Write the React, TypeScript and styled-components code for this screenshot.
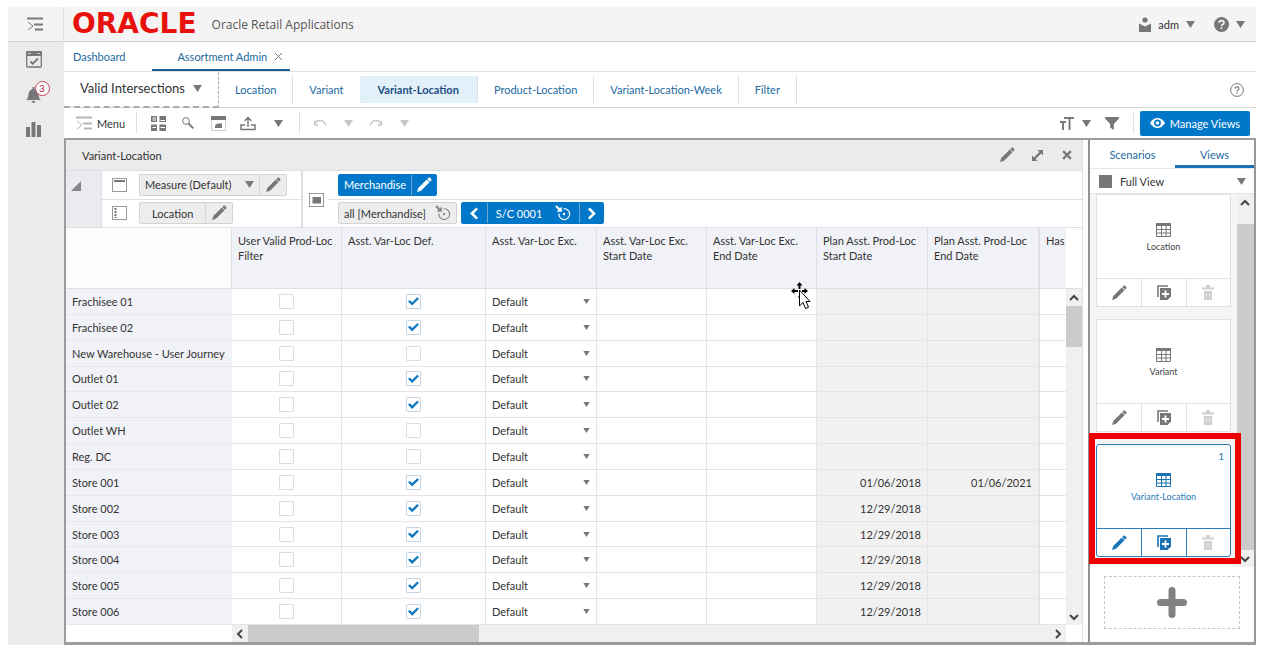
import React from "react";
import styled, { createGlobalStyle, css } from "styled-components";

const GREY = "#757779";
const BLUE = "#0077c8";
const LINK = "#22699f";
const LINE = "#dcdfe3";

const GlobalStyle = createGlobalStyle`
  * { box-sizing: border-box; }
  body {
    margin: 0;
    background: #fff;
    color: #333;
    font: 11px/15px Lato, "Open Sans", sans-serif;
  }
  button, input, select { font: inherit; color: inherit; margin: 0; }
  button { border: 0; padding: 0; background: none; cursor: pointer; }
  a { color: ${LINK}; text-decoration: none; }
  svg { display: block; flex: none; }
`;

/* ---------- icons ---------- */

type IconProps = { size?: number; color?: string };

const Caret = ({ size = 9, color = GREY }: IconProps) => (
  <svg width={size} height={size - 2} viewBox="0 0 9 7" aria-hidden="true">
    <path d="M0 0h9L4.500 7z" fill={color} />
  </svg>
);
const Pencil = ({ size = 16, color = GREY }: IconProps) => (
  <svg width={size} height={size} viewBox="0 0 16 16" aria-hidden="true">
    <path d="M1 15L2.300 11 10.800 2.500 13.500 5.200 5 13.700zM11.300 2L12.700.6Q13.200.2 13.700.6L15.400 2.300Q15.800 2.800 15.400 3.300L14 4.700z" fill={color} />
  </svg>
);
const Burger = ({ color = GREY }: IconProps) => (
  <svg width="17" height="14" viewBox="0 0 17 14" aria-hidden="true">
    <path d="M0 1.500h16M7 7.500h9M8 12.500h8" stroke={color} strokeWidth="2" fill="none" />
    <path d="M1 5l5 4-5 4" stroke={color} fill="none" />
  </svg>
);
const Chevron = ({ dir, color = "#444", size = 10, weight = 2 }: IconProps & { dir: "up" | "down" | "left" | "right"; weight?: number }) => {
  const d = { up: "M1 7l4-4 4 4", down: "M1 3l4 4 4-4", left: "M7 1L3 5l4 4", right: "M3 1l4 4-4 4" }[dir];
  return (
    <svg width={size} height={size} viewBox="0 0 10 10" aria-hidden="true">
      <path d={d} fill="none" stroke={color} strokeWidth={weight} />
    </svg>
  );
};
const Cross = ({ size = 9, weight = 1 }: IconProps & { weight?: number }) => (
  <svg width={size} height={size} viewBox="0 0 9 9" aria-hidden="true">
    <path d="M1 1l7 7M8 1L1 8" stroke={GREY} strokeWidth={weight} />
  </svg>
);
const CalendarCheck = () => (
  <svg width="16" height="17" viewBox="0 0 16 17" aria-hidden="true">
    <rect x=".7" y="1" width="14.600" height="15" rx="1" fill="none" stroke={GREY} strokeWidth="1.300" />
    <path d="M0 1q0-1 1-1h14q1 0 1 1v4H0z" fill={GREY} />
    <path d="M2.500 2.500h2M11.500 2.500h2" stroke="#ebebeb" />
    <path d="M4.500 10.500l2.200 2.200L12 7.500" fill="none" stroke={GREY} strokeWidth="1.800" />
  </svg>
);
const Bell = () => (
  <svg width="15" height="16" viewBox="0 0 15 16" aria-hidden="true">
    <path d="M0 13c2-1 2-3 2.500-6C3 3.500 5 2 7.500 2S12 3.500 12.500 7c.5 3 .5 5 2.500 6zM5.500 14h4q-.5 2-2 2t-2-2zM6.500 0h2v2h-2z" fill={GREY} />
  </svg>
);
const Bars = () => (
  <svg width="15" height="15" viewBox="0 0 15 15" aria-hidden="true">
    <path d="M0 5h4v10H0zM5.500 0h4v15h-4zM11 3h4v12h-4z" fill={GREY} />
  </svg>
);
const Person = () => (
  <svg width="12" height="15" viewBox="0 0 12 15" aria-hidden="true">
    <circle cx="6" cy="3" r="2.600" fill={GREY} />
    <path d="M0 6.500l6 3 6-3V15H0z" fill={GREY} />
  </svg>
);
const HelpSolid = () => (
  <svg width="15" height="15" viewBox="0 0 15 15" aria-hidden="true">
    <circle cx="7.500" cy="7.500" r="7.500" fill={GREY} />
    <path d="M5 5.800Q5.200 3.600 7.500 3.600T10 5.700Q10 6.800 8.600 7.500 7.500 8.100 7.500 9.200M7.500 10.300v1.700" fill="none" stroke="#f4f4f4" strokeWidth="1.600" />
  </svg>
);
const HelpRing = () => (
  <svg width="14" height="14" viewBox="0 0 14 14" aria-hidden="true">
    <circle cx="7" cy="7" r="6.400" fill="none" stroke={GREY} />
    <path d="M5 5.600Q5.200 3.900 7 3.900T9 5.500Q9 6.400 8 7 7 7.600 7 8.500M7 9.500v1.300" fill="none" stroke={GREY} strokeWidth="1.200" />
  </svg>
);
const Tiles = () => (
  <svg width="15" height="15" viewBox="0 0 15 15" aria-hidden="true">
    <path d="M0 0h6v6H0zM8.500 0H15v6H8.500zM0 8.500h6V15H0zM8.500 8.500H15V15H8.500z" fill={GREY} />
    <path d="M1.500 2h3.500M1.500 4h3.500M9.500 4.500h4.500M1.500 11.500h3.500M9.500 11.500h4.500" stroke="#fff" />
  </svg>
);
const Lens = () => (
  <svg width="12" height="12" viewBox="0 0 12 12" aria-hidden="true">
    <circle cx="4" cy="4" r="3.400" fill="none" stroke={GREY} />
    <path d="M6.500 6.500l4.800 4.800" stroke={GREY} strokeWidth="1.800" />
  </svg>
);
const WindowCalc = () => (
  <svg width="15" height="15" viewBox="0 0 15 15" aria-hidden="true">
    <path d="M.5 1v13.500h14V1" fill="none" stroke="#ccc" />
    <path d="M0 0h15v4H0zM4 10.500Q4 7.500 8 7.500h3V12H4z" fill={GREY} />
  </svg>
);
const Upload = () => (
  <svg width="16" height="15" viewBox="0 0 16 15" aria-hidden="true">
    <path d="M8 11V2M4.500 5L8 1.500 11.500 5M5 9H1v4.500h14V9h-4" fill="none" stroke={GREY} strokeWidth="1.400" />
  </svg>
);
const Turn = ({ flip }: { flip?: boolean }) => (
  <svg width="14" height="8" viewBox="0 0 14 8" aria-hidden="true">
    {flip ? (
      <path d="M1 6.500Q3 1.500 7 1.500T12 5.500M12.500 1.500v4.500H9" fill="none" stroke="#c8c8c8" strokeWidth="1.300" />
    ) : (
      <path d="M13 6.500Q11 1.500 7 1.500T2 5.500M1.500 1.500v4.500H5" fill="none" stroke="#c8c8c8" strokeWidth="1.300" />
    )}
  </svg>
);
const TextSize = () => (
  <svg width="14" height="13" viewBox="0 0 14 13" aria-hidden="true">
    <path d="M4 1h10M9.500 1v12M0 5h6M3 5v8" stroke={GREY} strokeWidth="1.900" />
  </svg>
);
const Funnel = () => (
  <svg width="14" height="13" viewBox="0 0 14 13" aria-hidden="true">
    <path d="M0 0h14v1.500L8.800 7v6L5.200 10.500V7L0 1.500z" fill={GREY} />
  </svg>
);
const Eye = () => (
  <svg width="15" height="10" viewBox="0 0 15 10" aria-hidden="true">
    <path d="M0 5Q3 0 7.500 0T15 5Q12 10 7.500 10T0 5z" fill="#fff" />
    <circle cx="7.500" cy="5" r="3.400" fill={BLUE} />
    <circle cx="7.500" cy="5" r="1.800" fill="#fff" />
  </svg>
);
const Expand = () => (
  <svg width="13" height="13" viewBox="0 0 13 13" aria-hidden="true">
    <path d="M3 10L10 3" stroke={GREY} strokeWidth="2.400" />
    <path d="M6.500 1H12v5.500zM1 6.500V12h5.500z" fill={GREY} />
  </svg>
);
const Fold = () => (
  <svg width="10" height="10" viewBox="0 0 10 10" aria-hidden="true">
    <path d="M10 0v10H0z" fill="#85878a" />
  </svg>
);
const AxisIcon = ({ kind }: { kind: "column" | "row" | "page" }) => (
  <svg width="15" height="14" viewBox="0 0 15 14" aria-hidden="true">
    <rect x=".5" y=".5" width="14" height="13" fill="#fff" stroke="#97999c" />
    {kind === "column" && <path d="M2 3h11" stroke={GREY} strokeWidth="2" />}
    {kind === "row" && <path d="M3.500 2v10" stroke={GREY} strokeDasharray="2 1" strokeWidth="2" />}
    {kind === "page" && <path d="M3.500 4h8.500v6.500H3.500z" fill={GREY} />}
  </svg>
);
const Target = ({ color = "#85878a" }: IconProps) => (
  <svg width="16" height="16" viewBox="0 0 16 16" aria-hidden="true">
    <path d="M8.500 3.800A5.400 5.400 0 1 1 3.900 8.500" fill="none" stroke={color} strokeWidth="1.200" />
    <circle cx="9" cy="9" r="1.200" fill={color} />
    <path d="M1 1l4 4" stroke={color} strokeWidth="2" />
    <path d="M6.800 1.500v5.300H1.500z" fill={color} />
  </svg>
);
const GridIcon = ({ color = GREY }: IconProps) => (
  <svg width="15" height="14" viewBox="0 0 15 14" aria-hidden="true">
    <path d="M.5 1v12.500h14V1M0 6.500h15M0 10h15M5.500 3v11M10 3v11" fill="none" stroke={color} />
    <path d="M0 0h15v3H0z" fill={color} />
  </svg>
);
const Copy = ({ color = GREY }: IconProps) => (
  <svg width="14" height="15" viewBox="0 0 14 15" aria-hidden="true">
    <path d="M11 1H1v11" fill="none" stroke={color} strokeWidth="1.600" />
    <path d="M3 3h11v8.500L10.500 15H3z" fill={color} />
    <path d="M8.500 5.500v7M5 9h7" stroke="#fff" strokeWidth="1.800" />
  </svg>
);
const Trash = () => (
  <svg width="12" height="15" viewBox="0 0 12 15" aria-hidden="true">
    <path d="M0 2.500h12v2H0zM4 0h4v2.500H4zM2 6h8v9H2z" fill="#cfcfcf" />
    <path d="M4.500 8v5M7.500 8v5" stroke="#e8e8e8" />
  </svg>
);
const Plus = () => (
  <svg width="30" height="31" viewBox="0 0 30 31" aria-hidden="true">
    <path d="M15 3.500v24M3.500 15.500h23" stroke="#808284" strokeWidth="7" strokeLinecap="round" />
  </svg>
);
const MoveCursor = () => (
  <svg width="20" height="28" viewBox="0 0 20 28" aria-hidden="true">
    <path d="M8.500 0L5.500 3.500h2V7h2V3.500h2zM0 9l3.500-3v2H7v2H3.500v2zM17 9l-3.500-3v2H11v2h2.500v2zM7.500 14h2v2h-2z" fill="#000" />
    <path d="M8.500 8v16l3.500-3.500 2.500 6 3-1.300-2.500-5.700H19z" fill="#fff" stroke="#000" />
  </svg>
);

/* ---------- frame ---------- */

const Page = styled.div`
  display: flex;
  flex-direction: column;
  min-height: 100vh;
  padding: 7px 9px 5px 8px;
`;
const TopBar = styled.header`
  display: flex;
  align-items: center;
  height: 35px;
  background: #f4f4f4;
  border-bottom: 1px solid #cfd1d3;
`;
const TopMenu = styled.button`
  display: flex;
  align-items: center;
  justify-content: center;
  width: 56px;
  height: 34px;
  border-right: 1px solid ${LINE};
`;
const Logo = styled.span`
  padding: 0 15px 0 8px;
  color: #e8120c;
  font: bold 28px/34px "DejaVu Sans", sans-serif;
`;
const AppName = styled.span`
  flex: 1;
  color: #555;
  font-family: "Open Sans", sans-serif;
  font-size: 12px;
`;
const TopButton = styled.button`
  display: flex;
  align-items: center;
  gap: 7px;
  margin-right: 11px;
  & + & { margin-left: 8px; }
`;
const Body = styled.div`
  flex: 1;
  display: flex;
`;
const Rail = styled.nav`
  display: flex;
  flex-direction: column;
  align-items: center;
  gap: 18px;
  width: 56px;
  padding: 9px 5px 0 0;
  background: #ebebeb;
`;
const RailButton = styled.button`
  position: relative;
  display: flex;
  align-items: center;
  justify-content: center;
  width: 24px;
  height: 17px;
`;
const Badge = styled.span`
  position: absolute;
  top: -5px;
  right: -4px;
  width: 15px;
  height: 15px;
  border: 1px solid #c0405a;
  border-radius: 50%;
  background: #fff;
  color: #c0203f;
  font-size: 10px;
  line-height: 13px;
`;
const Main = styled.main`
  flex: 1;
  min-width: 0;
  display: flex;
  flex-direction: column;
`;
const DocTabs = styled.div`
  display: flex;
  height: 30px;
  border-bottom: 1px solid #dedede;
`;
const DocTab = styled.div<{ $active?: boolean }>`
  display: flex;
  align-items: center;
  gap: 7px;
  padding: 2px ${(p) => (p.$active ? "7px 0 25px" : "27px 0 9px")};
  border-bottom: 2px solid ${(p) => (p.$active ? "#1f5f9c" : "transparent")};
`;
const TaskBar = styled.div`
  display: flex;
  align-items: center;
  height: 36px;
  padding-right: 12px;
  border-bottom: 1px solid #d6d6d6;
`;
const TaskPicker = styled.button`
  display: flex;
  align-items: center;
  gap: 8px;
  height: 36px;
  width: 155px;
  padding-left: 16px;
  border: dashed #aaa;
  border-width: 0 1px 2px 0;
  font-size: 13px;
`;
const StepNav = styled.nav`
  flex: 1;
  display: flex;
`;
const Step = styled.a<{ $active?: boolean }>`
  padding: 6px 16px;
  border-right: 1px solid ${LINE};
  ${(p) =>
    p.$active &&
    css`
      margin-left: -1px;
      padding: 6px 18px;
      border-radius: 2px;
      background: #e2f0fa;
      color: #1c4f80;
      font-weight: bold;
    `}
`;
const ToolBar = styled.div`
  display: flex;
  align-items: center;
  height: 30px;
  padding-right: 6px;
`;
const MenuButton = styled.button`
  display: flex;
  align-items: center;
  gap: 4px;
  padding: 0 5px 0 12px;
`;
const Tool = styled.button<{ $w: number }>`
  display: flex;
  align-items: center;
  justify-content: center;
  width: ${(p) => p.$w}px;
  height: 24px;
`;
const Rule = styled.span`
  width: 1px;
  height: 22px;
  margin: 0 6px;
  background: ${LINE};
`;
const Spacer = styled.span`
  flex: 1;
`;
const Manage = styled.button`
  display: flex;
  align-items: center;
  gap: 5px;
  height: 25px;
  padding: 0 10px;
  border-radius: 2px;
  background: ${BLUE};
  color: #fff;
`;

/* ---------- worksheet ---------- */

const Work = styled.div`
  flex: 1;
  display: flex;
  gap: 5px;
  border: 2px solid #9b9c9e;
  border-width: 2px 1px 3px 2px;
`;
const Sheet = styled.section`
  flex: 1;
  min-width: 0;
  display: flex;
  flex-direction: column;
  border-right: 1px solid ${LINE};
`;
const SheetTitle = styled.div`
  display: flex;
  align-items: center;
  height: 31px;
  padding-left: 16px;
  background: #ebebeb;
  border-bottom: 1px solid ${LINE};
`;
const SheetHeading = styled.h1`
  flex: 1;
  margin: 0;
  font-size: 11px;
  font-weight: normal;
`;
const Axes = styled.div`
  display: flex;
  height: 56px;
`;
const FoldCell = styled.button`
  display: flex;
  width: 36px;
  padding: 10px 0 0 5px;
  background: #ebebef;
  border-right: 1px solid ${LINE};
`;
const AxisGroup = styled.div<{ $wide?: boolean }>`
  display: flex;
  flex-direction: column;
  ${(p) => (p.$wide ? "flex: 1;" : "width: 199px;")}
`;
const AxisRow = styled.div`
  flex: 1;
  display: flex;
  align-items: center;
  gap: 4px;
  padding-left: 10px;
  & + & { border-top: 1px solid ${LINE}; }
  & > svg { margin-right: 8px; }
`;
const PageAxis = styled.div`
  display: flex;
  align-items: center;
  padding: 2px 4px 0 6px;
  border-left: 2px solid ${LINE};
`;
const Chip = styled.div<{ $blue?: boolean }>`
  display: flex;
  height: 22px;
  border: 1px solid ${(p) => (p.$blue ? BLUE : "#d3d3d3")};
  border-radius: 2px;
  background: ${(p) => (p.$blue ? BLUE : "#ededed")};
  color: ${(p) => (p.$blue ? "#fff" : "#333")};
`;
const ChipPart = styled.button<{ $pad?: number; $gap?: number }>`
  display: flex;
  align-items: center;
  gap: ${(p) => p.$gap ?? 13}px;
  padding: 0 ${(p) => p.$pad ?? 5}px;
  & + & { border-left: 1px solid rgba(190, 200, 210, 0.600); }
`;

const GridArea = styled.div`
  flex: 1;
  display: flex;
  border-top: 1px solid ${LINE};
`;
const TableClip = styled.div`
  flex: 1;
  min-width: 0;
  display: grid;
  overflow: hidden;
`;
const Table = styled.table`
  table-layout: fixed;
  width: 100%;
  height: 100%;
  border-collapse: separate;
  border-spacing: 0;
`;
const HeadCell = styled.th<{ $w?: number; $blank?: boolean; $freeze?: boolean }>`
  ${(p) => p.$w && `width: ${p.$w}px;`}
  height: 61px;
  padding: 5px 0 0 6px;
  background: ${(p) => (p.$blank ? "#fcfcfd" : "#f0f2f7")};
  border: solid ${LINE};
  border-width: 0 ${(p) => (p.$freeze ? 2 : 1)}px 1px 0;
  font-weight: normal;
  text-align: left;
  vertical-align: top;
  overflow: hidden;
  white-space: nowrap;
  &:last-child { border-right: 0; }
`;
const RowHead = styled.th`
  padding: 0 6px;
  background: #f0f2f7;
  border-bottom: 1px solid #e4e7ec;
  font-weight: normal;
  text-align: left;
  white-space: nowrap;
`;
const Cell = styled.td<{ $locked?: boolean; $freeze?: boolean; $align?: string }>`
  padding: 0 6px;
  border: solid #e4e4e6;
  border-width: 0 ${(p) => (p.$freeze ? 2 : 1)}px 1px 0;
  background: ${(p) => (p.$locked ? "#f1f1f1" : "#fff")};
  text-align: ${(p) => p.$align ?? "left"};
  &:last-child { border-right: 0; }
`;
const Check = styled.input.attrs({ type: "checkbox" })`
  appearance: none;
  display: block;
  position: relative;
  width: 15px;
  height: 15px;
  margin: 0 auto;
  border: 1px solid #dcdcdc;
  border-radius: 1px;
  background: #fff;
  &:checked { border-color: #c3d5e4; }
  &:checked::after {
    content: "";
    position: absolute;
    inset: 2px 1px;
    background: #1478be;
    clip-path: polygon(0 50%, 16% 34%, 38% 58%, 84% 4%, 100% 20%, 38% 96%);
  }
`;
const Picker = styled.label`
  display: flex;
  align-items: center;
`;
const Select = styled.select`
  appearance: none;
  flex: 1;
  min-width: 0;
  padding: 0;
  border: 0;
  background: none;
`;
const VBar = styled.div`
  display: flex;
  flex-direction: column;
  width: 16px;
  background: #f0f0f0;
`;
const VBlank = styled.div`
  height: 61px;
  background: #fff;
  border-bottom: 1px solid ${LINE};
`;
const Arrow = styled.button`
  display: flex;
  align-items: center;
  justify-content: center;
  width: 16px;
  height: 17px;
`;
const Thumb = styled.div<{ $h?: number; $w?: number }>`
  background: #cbcbcb;
  ${(p) => (p.$h ? `height: ${p.$h}px;` : "")}
  ${(p) => (p.$w ? `width: ${p.$w}px;` : "")}
`;
const Foot = styled.div`
  display: flex;
  height: 17px;
  padding: 0 16px 0 166px;
`;
const HBar = styled.div`
  flex: 1;
  display: flex;
  background: #f0f0f0;
`;
const CursorMark = styled.div`
  position: absolute;
  left: 791px;
  top: 282px;
  pointer-events: none;
`;

/* ---------- side panel ---------- */

const Side = styled.aside`
  display: flex;
  flex-direction: column;
  width: 167px;
  border: solid #8f9194;
  border-width: 0 1px 0 2px;
`;
const SideTabs = styled.div`
  display: flex;
  height: 29px;
  border-bottom: 1px solid #e6e6e6;
`;
const SideTab = styled.a<{ $active?: boolean; $w: number }>`
  width: ${(p) => p.$w}px;
  padding-top: 7px;
  border-bottom: 3px solid ${(p) => (p.$active ? "#1a73b5" : "transparent")};
  text-align: center;
`;
const ViewPicker = styled.button`
  display: flex;
  align-items: center;
  gap: 8px;
  height: 25px;
  padding: 0 8px 0 9px;
  border-bottom: 1px solid #e6e6e6;
`;
const Square = styled.span`
  width: 13px;
  height: 13px;
  background: ${GREY};
`;
const PickerText = styled.span`
  flex: 1;
  text-align: left;
`;
const ViewArea = styled.div`
  flex: 1;
  display: flex;
  justify-content: space-between;
  background: #f5f5f6;
  padding-left: 6px;
`;
const Cards = styled.div`
  display: flex;
  flex-direction: column;
  gap: 12px;
  width: 135px;
`;
const Card = styled.article<{ $on?: boolean }>`
  position: relative;
  height: 113px;
  display: flex;
  flex-direction: column;
  border: 1px solid ${(p) => (p.$on ? "#2b7bb9" : "#dfe1e3")};
  border-radius: ${(p) => (p.$on ? 3 : 0)}px;
  background: #fff;
  color: ${(p) => (p.$on ? "#2b7bb9" : "#444")};
`;
const CardFace = styled.div`
  flex: 1;
  display: flex;
  flex-direction: column;
  align-items: center;
  gap: 2px;
  padding-top: 28px;
  font-size: 9px;
`;
const Count = styled.span`
  position: absolute;
  top: 4px;
  right: 6px;
  font-size: 10px;
`;
const CardActions = styled.div`
  display: grid;
  grid-template-columns: repeat(3, 1fr);
  height: 28px;
  border-top: 1px solid;
  border-color: inherit;
`;
const CardAction = styled.button`
  display: flex;
  align-items: center;
  justify-content: center;
  border: 0 solid;
  border-color: inherit;
  & + & { border-left-width: 1px; }
`;
const Outline = styled.div`
  position: absolute;
  inset: -12px -11px -8px -8px;
  border: 6px solid #ec0000;
  pointer-events: none;
`;
const SideBar = styled.div`
  display: flex;
  flex-direction: column;
  width: 17px;
  background: #f0f0f0;
`;
const ThumbFill = styled(Thumb)`
  flex: 1;
  margin-top: 13px;
`;
const AddZone = styled.div`
  padding: 9px 14px 13px 14px;
`;
const AddButton = styled.button`
  display: flex;
  align-items: center;
  justify-content: center;
  width: 100%;
  height: 53px;
  border: 1px dashed #c8c8c8;
`;

/* ---------- data ---------- */

const steps = ["Location", "Variant", "Variant-Location", "Product-Location", "Variant-Location-Week", "Filter"];

const columns: { lines: string[]; w?: number; freeze?: boolean }[] = [
  { lines: ["User Valid Prod-Loc", "Filter"], w: 110 },
  { lines: ["Asst. Var-Loc Def."], w: 144 },
  { lines: ["Asst. Var-Loc Exc."], w: 111 },
  { lines: ["Asst. Var-Loc Exc.", "Start Date"], w: 110 },
  { lines: ["Asst. Var-Loc Exc.", "End Date"], w: 110 },
  { lines: ["Plan Asst. Prod-Loc", "Start Date"], w: 111 },
  { lines: ["Plan Asst. Prod-Loc", "End Date"], w: 112, freeze: true },
  { lines: ["Has"] },
];

const rows: { name: string; on: boolean; start?: string; end?: string }[] = [
  { name: "Frachisee 01", on: true },
  { name: "Frachisee 02", on: true },
  { name: "New Warehouse - User Journey", on: false },
  { name: "Outlet 01", on: true },
  { name: "Outlet 02", on: true },
  { name: "Outlet WH", on: false },
  { name: "Reg. DC", on: false },
  { name: "Store 001", on: true, start: "01/06/2018", end: "01/06/2021" },
  { name: "Store 002", on: true, start: "12/29/2018" },
  { name: "Store 003", on: true, start: "12/29/2018" },
  { name: "Store 004", on: true, start: "12/29/2018" },
  { name: "Store 005", on: true, start: "12/29/2018" },
  { name: "Store 006", on: true, start: "12/29/2018" },
];

const ViewCard = ({ name, count }: { name: string; count?: number }) => {
  const on = count !== undefined;
  const tone = on ? "#1a73b5" : GREY;
  return (
    <Card $on={on}>
      {on && <Count>{count}</Count>}
      <CardFace>
        <GridIcon color={tone} />
        {name}
      </CardFace>
      <CardActions>
        <CardAction aria-label={`Edit ${name}`}><Pencil color={tone} /></CardAction>
        <CardAction aria-label={`Copy ${name}`}><Copy color={tone} /></CardAction>
        <CardAction aria-label={`Delete ${name}`}><Trash /></CardAction>
      </CardActions>
      {on && <Outline />}
    </Card>
  );
};

export default function App() {
  return (
    <Page>
      <GlobalStyle />
      <TopBar>
        <TopMenu aria-label="Open navigation"><Burger /></TopMenu>
        <Logo>ORACLE</Logo>
        <AppName>Oracle Retail Applications</AppName>
        <TopButton><Person />adm <Caret /></TopButton>
        <TopButton aria-label="Help"><HelpSolid /><Caret /></TopButton>
      </TopBar>
      <Body>
        <Rail>
          <RailButton aria-label="Tasks"><CalendarCheck /></RailButton>
          <RailButton aria-label="Notifications"><Bell /><Badge>3</Badge></RailButton>
          <RailButton aria-label="Reports"><Bars /></RailButton>
        </Rail>
        <Main>
          <DocTabs>
            <DocTab><a href="#dashboard">Dashboard</a></DocTab>
            <DocTab $active>
              <a href="#assortment">Assortment Admin</a>
              <button aria-label="Close tab"><Cross /></button>
            </DocTab>
          </DocTabs>
          <TaskBar>
            <TaskPicker>Valid Intersections <Caret /></TaskPicker>
            <StepNav>
              {steps.map((s) => (
                <Step key={s} href={`#${s}`} $active={s === "Variant-Location"}>{s}</Step>
              ))}
            </StepNav>
            <button aria-label="Help"><HelpRing /></button>
          </TaskBar>
          <ToolBar>
            <MenuButton><Burger color="#b5b7b9" />Menu</MenuButton>
            <Rule />
            <Tool $w={30} aria-label="Layout"><Tiles /></Tool>
            <Tool $w={30} aria-label="Find"><Lens /></Tool>
            <Tool $w={30} aria-label="Calculate"><WindowCalc /></Tool>
            <Tool $w={30} aria-label="Commit"><Upload /></Tool>
            <Tool $w={30} aria-label="Commit options"><Caret /></Tool>
            <Rule />
            <Tool $w={28} aria-label="Undo"><Turn /></Tool>
            <Tool $w={28} aria-label="Undo history"><Caret color="#c8c8c8" /></Tool>
            <Tool $w={28} aria-label="Redo"><Turn flip /></Tool>
            <Tool $w={28} aria-label="Redo history"><Caret color="#c8c8c8" /></Tool>
            <Spacer />
            <Tool $w={20} aria-label="Text size"><TextSize /></Tool>
            <Tool $w={20} aria-label="Text size options"><Caret /></Tool>
            <Tool $w={30} aria-label="Filter"><Funnel /></Tool>
            <Rule />
            <Manage><Eye />Manage Views</Manage>
          </ToolBar>
          <Work>
            <Sheet>
              <SheetTitle>
                <SheetHeading>Variant-Location</SheetHeading>
                <Tool $w={30} aria-label="Edit view"><Pencil /></Tool>
                <Tool $w={30} aria-label="Maximize"><Expand /></Tool>
                <Tool $w={30} aria-label="Close view"><Cross size={10} weight={2} /></Tool>
              </SheetTitle>
              <Axes>
                <FoldCell aria-label="Collapse axes"><Fold /></FoldCell>
                <AxisGroup>
                  <AxisRow>
                    <AxisIcon kind="column" />
                    <Chip>
                      <ChipPart>Measure (Default) <Caret /></ChipPart>
                      <ChipPart aria-label="Edit measure"><Pencil /></ChipPart>
                    </Chip>
                  </AxisRow>
                  <AxisRow>
                    <AxisIcon kind="row" />
                    <Chip>
                      <ChipPart $pad={12}>Location</ChipPart>
                      <ChipPart aria-label="Edit location"><Pencil /></ChipPart>
                    </Chip>
                  </AxisRow>
                </AxisGroup>
                <PageAxis><AxisIcon kind="page" /></PageAxis>
                <AxisGroup $wide>
                  <AxisRow>
                    <Chip $blue>
                      <ChipPart>Merchandise</ChipPart>
                      <ChipPart $pad={4} aria-label="Edit merchandise"><Pencil color="#fff" /></ChipPart>
                    </Chip>
                  </AxisRow>
                  <AxisRow>
                    <Chip><ChipPart $gap={9}>all [Merchandise] <Target /></ChipPart></Chip>
                    <Chip $blue>
                      <ChipPart $pad={6} aria-label="Previous"><Chevron dir="left" color="#fff" size={13} /></ChipPart>
                      <ChipPart $pad={8}>S/C 0001 <Target color="#fff" /></ChipPart>
                      <ChipPart $pad={5} aria-label="Next"><Chevron dir="right" color="#fff" size={13} /></ChipPart>
                    </Chip>
                  </AxisRow>
                </AxisGroup>
              </Axes>
              <GridArea>
                <TableClip>
                  <Table>
                    <thead>
                      <tr>
                        <HeadCell as="td" $w={166} $blank />
                        {columns.map((c, i) => (
                          <HeadCell key={i} scope="col" $w={c.w} $freeze={c.freeze}>
                            {c.lines.map((l) => <div key={l}>{l}</div>)}
                          </HeadCell>
                        ))}
                      </tr>
                    </thead>
                    <tbody>
                      {rows.map((r) => (
                        <tr key={r.name}>
                          <RowHead scope="row">{r.name}</RowHead>
                          <Cell><Check aria-label={`${r.name} user filter`} /></Cell>
                          <Cell><Check defaultChecked={r.on} aria-label={`${r.name} default`} /></Cell>
                          <Cell>
                            <Picker>
                              <Select aria-label={`${r.name} exception`}><option>Default</option></Select>
                              <Caret size={7} />
                            </Picker>
                          </Cell>
                          <Cell />
                          <Cell />
                          <Cell $locked $align="right">{r.start}</Cell>
                          <Cell $locked $freeze $align="right">{r.end}</Cell>
                          <Cell />
                        </tr>
                      ))}
                    </tbody>
                  </Table>
                </TableClip>
                <VBar>
                  <VBlank />
                  <Arrow aria-label="Scroll up"><Chevron dir="up" /></Arrow>
                  <Thumb $h={41} />
                  <Spacer />
                  <Arrow aria-label="Scroll down"><Chevron dir="down" /></Arrow>
                </VBar>
              </GridArea>
              <Foot>
                <HBar>
                  <Arrow aria-label="Scroll left"><Chevron dir="left" /></Arrow>
                  <Thumb $w={231} />
                  <Spacer />
                  <Arrow aria-label="Scroll right"><Chevron dir="right" /></Arrow>
                </HBar>
              </Foot>
            </Sheet>
            <Side>
              <SideTabs>
                <SideTab href="#scenarios" $w={85}>Scenarios</SideTab>
                <SideTab href="#views" $w={79} $active>Views</SideTab>
              </SideTabs>
              <ViewPicker>
                <Square />
                <PickerText>Full View</PickerText>
                <Caret />
              </ViewPicker>
              <ViewArea>
                <Cards>
                  <ViewCard name="Location" />
                  <ViewCard name="Variant" />
                  <ViewCard name="Variant-Location" count={1} />
                </Cards>
                <SideBar>
                  <Arrow aria-label="Scroll up"><Chevron dir="up" /></Arrow>
                  <ThumbFill />
                  <Arrow aria-label="Scroll down"><Chevron dir="down" /></Arrow>
                </SideBar>
              </ViewArea>
              <AddZone>
                <AddButton aria-label="Add view"><Plus /></AddButton>
              </AddZone>
            </Side>
          </Work>
        </Main>
      </Body>
      <CursorMark><MoveCursor /></CursorMark>
    </Page>
  );
}
